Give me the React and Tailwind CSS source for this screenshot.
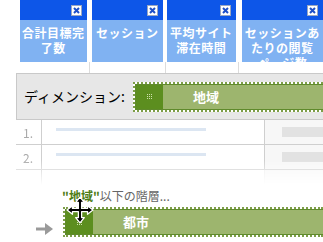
import React from 'react';

const FONT = { fontFamily: '"Noto Sans CJK JP", "Noto Sans", sans-serif' };

// small close box in the header corner
function CloseBox() {
    return (
        <svg width="11" height="11" viewBox="0 0 11 11" className="block">
            <rect x="0.5" y="0.5" width="10" height="10" fill="#ffffff" stroke="#9aa6c0" />
            <path d="M3 3 L8 8 M8 3 L3 8" stroke="#1d4fc8" strokeWidth="2" />
        </svg>
    );
}

function Column({ width, lines }) {
    return (
        <div className="flex flex-col" style={{ width }}>
            <div className="h-[20px] bg-[#0d56e8] flex items-center justify-end pr-[5px]">
                <CloseBox />
            </div>
            <div className="h-[42px] bg-[#80b2f2] overflow-hidden pt-[5px] text-white font-bold text-[12px] leading-[15px] tracking-[0.5px] text-center whitespace-nowrap">
                {lines.map((l, i) => (
                    <div key={i}>{l}</div>
                ))}
            </div>
            <div className="h-[11px] bg-white" />
        </div>
    );
}

function Gap({ width }) {
    return (
        <div className="flex justify-center items-end" style={{ width }}>
            <div className="w-px h-[11px] bg-[#dcdcdc]" />
        </div>
    );
}

// 3x3 grip dots on the handle
function Grip() {
    return (
        <div className="grid grid-cols-3 gap-px">
            {[0, 1, 2, 3, 4, 5, 6, 7, 8].map((i) => (
                <div key={i} className="w-px h-px bg-[#cfe0ad]" />
            ))}
        </div>
    );
}

// dimension pill: dark handle + light label, dotted edge
function Pill({ label }) {
    return (
        <div className="flex-1 h-[30px] border-y-2 border-l-2 border-dotted border-[#7d9e48] bg-white">
            <div className="flex h-full border-y border-l border-[#5f8a2c]">
                <div className="w-[27px] bg-[#5c8e1f] flex items-center pl-[11px]">
                    <Grip />
                </div>
                <div className="flex-1 bg-[#9db56e] flex items-center pl-[30px] text-white font-bold text-[13px]">
                    {label}
                </div>
            </div>
        </div>
    );
}

function Row({ n }) {
    return (
        <div className="flex h-[25px] border-b border-[#cfcfcf]">
            <div className="w-[26px] border-r border-[#cfcfcf] text-[#aaaaaa] text-[12px] pl-[7px] pt-[7px] leading-[12px]">{n}.</div>
            <div className="w-[223px] border-r border-[#cfcfcf] pl-[14px] pt-[8px]">
                <div className="w-[150px] h-[3px] bg-[#dce6f2]" />
            </div>
            <div className="flex-1 bg-[#f7f7f7] pl-[17px] pt-[7px]">
                <div className="h-[10px] bg-[#e2e2e2]" />
            </div>
        </div>
    );
}

export default function App() {
    return (
        <div className="relative w-[323px] h-[242px] overflow-hidden bg-white" style={FONT}>
            {/* COLUMN HEADERS */}
            <div className="flex pl-[20px]">
                <Column width={67} lines={['合計目標完', '了数']} />
                <Gap width={5} />
                <Column width={72} lines={['セッション']} />
                <Gap width={4} />
                <Column width={69} lines={['平均サイト', '滞在時間']} />
                <Gap width={6} />
                <Column width={82} lines={['セッションあ', 'たりの閲覧', 'ページ数']} />
            </div>

            {/* DIMENSION BAR */}
            <div className="ml-[16px] h-[47px] bg-[#e7e7e7] border-t border-l border-b border-[#c9c9c9] flex items-center pl-[7px]">
                <div className="w-[109px] text-[14px] text-black whitespace-nowrap">ディメンション:</div>
                <Pill label="地域" />
            </div>

            {/* TABLE (fades out) */}
            <div className="ml-[16px] h-[65px] overflow-hidden [mask-image:linear-gradient(to_bottom,black_62%,transparent_100%)]">
                <Row n={1} />
                <Row n={2} />
                <div className="flex h-[20px]">
                    <div className="w-[26px] border-r border-[#cfcfcf]" />
                    <div className="w-[223px] border-r border-[#ececec]" />
                    <div className="flex-1 bg-[#f7f7f7]" />
                </div>
            </div>

            {/* SUB-LEVEL */}
            <div className="pl-[62px] pt-[3px] text-[12px] leading-[16px] whitespace-nowrap">
                <span className="text-[#4f7d16] font-bold">"地域"</span>
                <span className="text-[#666666]">以下の階層...</span>
            </div>
            <div className="flex pl-[36px] mt-[3px]">
                <svg width="18" height="12" viewBox="0 0 18 12" className="mt-[16px] mr-[9px]">
                    <path d="M0 6 H10" stroke="#9a9a9a" strokeWidth="3" />
                    <path d="M9 0 L17 6 L9 12 Z" fill="#9a9a9a" />
                </svg>
                <Pill label="都市" />
            </div>

            {/* move cursor */}
            <svg width="28" height="28" viewBox="0 0 26 26" className="absolute left-[66px] top-[196px]">
                <path
                    d="M13 1 L17 6 L14.5 6 L14.5 11.5 L20 11.5 L20 9 L25 13 L20 17 L20 14.5 L14.5 14.5 L14.5 20 L17 20 L13 25 L9 20 L11.5 20 L11.5 14.5 L6 14.5 L6 17 L1 13 L6 9 L6 11.5 L11.5 11.5 L11.5 6 L9 6 Z"
                    fill="#000000"
                    stroke="#ffffff"
                    strokeWidth="1.2"
                    strokeLinejoin="round"
                />
            </svg>
        </div>
    );
}
